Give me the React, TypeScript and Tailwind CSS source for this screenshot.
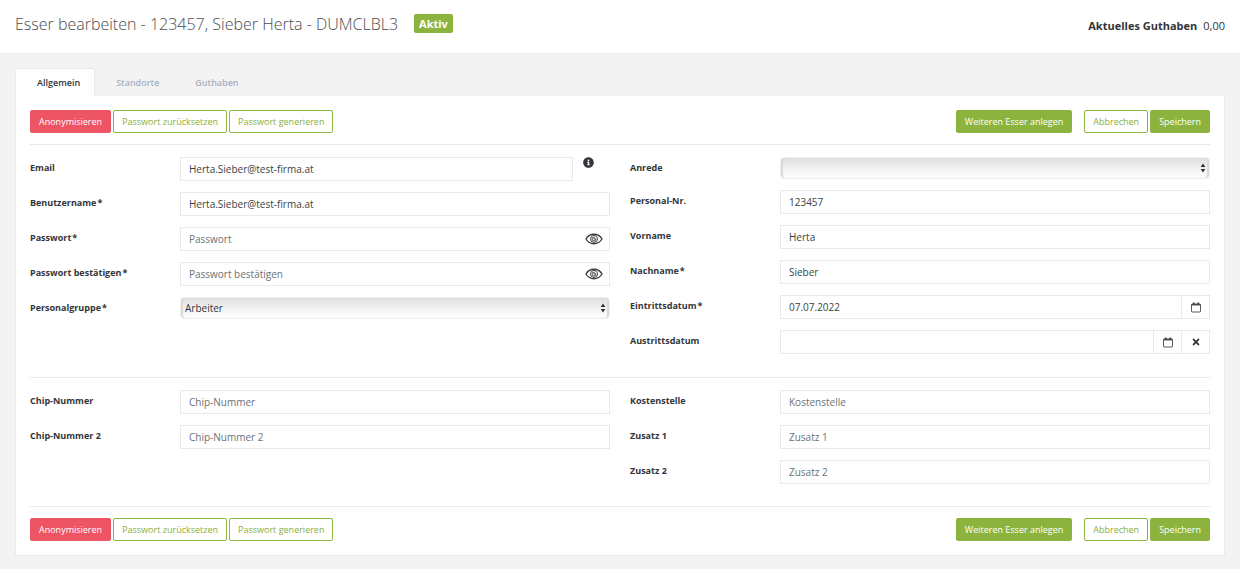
import { useState } from "react";
import type { InputHTMLAttributes, ReactNode } from "react";
import { FaInfoCircle, FaTimes } from "react-icons/fa";

const controlClass =
  "block h-6 w-full min-w-0 border border-[#e9e9e9] bg-white px-2 text-[10px] text-[#3c3f42] outline-none placeholder:text-[#6b7177] placeholder:opacity-100 focus:border-[#8db33f]";

type FieldProps = { id: string; label: string; required?: boolean };

function Row({ id, label, required, children }: FieldProps & { children: ReactNode }) {
  return (
    <div className="flex items-start">
      <label
        htmlFor={id}
        className="flex w-[150px] shrink-0 gap-px text-[9px] leading-[22px] font-bold text-[#33363a]"
      >
        {label}
        {required && <span>*</span>}
      </label>
      <div className="flex min-w-0 flex-1">{children}</div>
    </div>
  );
}

function TextRow({ id, label, required, ...rest }: FieldProps & InputHTMLAttributes<HTMLInputElement>) {
  return (
    <Row id={id} label={label} required={required}>
      <input id={id} className={controlClass} {...rest} />
    </Row>
  );
}

function EyeIcon() {
  return (
    <svg viewBox="0 0 18 12" className="h-3 w-[18px]" fill="none" stroke="#3c3f42">
      <path d="M1 6C3 2.6 5.8 1.3 9 1.3S15 2.6 17 6C15 9.4 12.200 10.700 9 10.700S3 9.400 1 6Z" strokeWidth="1.400" />
      <circle cx="9" cy="5.900" r="3.500" strokeWidth="1" />
      <path d="M9.200 4.100A1.900 1.900 0 1 0 10.900 5.800L9 6.100Z" strokeWidth="0.900" />
    </svg>
  );
}

function CalendarIcon() {
  return (
    <svg viewBox="0 0 10 11" className="h-[11px] w-[10px]" fill="none" stroke="#45484c">
      <rect x="0.500" y="2" width="9" height="8" rx="0.500" strokeWidth="0.900" />
      <path d="M0.500 2.700H9.500" strokeWidth="1.500" />
      <path d="M2.700 0.500V3M7.300 0.500V3" strokeWidth="1.700" />
    </svg>
  );
}

function PasswordRow({ id, label, placeholder }: { id: string; label: string; placeholder: string }) {
  const [shown, setShown] = useState(false);
  return (
    <Row id={id} label={label} required>
      <div className="flex h-6 w-full items-center border border-[#e9e9e9] bg-white pr-1.5">
        <input
          id={id}
          type={shown ? "text" : "password"}
          placeholder={placeholder}
          className="h-full min-w-0 flex-1 px-2 text-[10px] text-[#3c3f42] outline-none placeholder:text-[#6b7177] placeholder:opacity-100"
        />
        <button type="button" aria-label="Passwort anzeigen" onClick={() => setShown(!shown)}>
          <EyeIcon />
        </button>
      </div>
    </Row>
  );
}

function SelectRow({ id, label, required, options }: FieldProps & { options: string[] }) {
  return (
    <Row id={id} label={label} required={required}>
      <div className="relative w-full">
        <select
          id={id}
          className="block h-[22px] w-full appearance-none rounded-[4px] border border-[#efefef] bg-linear-to-b from-[#dedede] via-[#f1f1f1] to-white px-1 text-[10px] text-[#33363a] shadow-[inset_2px_0_1px_#dadada,inset_-2px_0_1px_#dadada] outline-none"
        >
          {options.map((option) => (
            <option key={option}>{option}</option>
          ))}
        </select>
        <svg
          viewBox="0 0 6 10"
          className="pointer-events-none absolute top-1.5 right-1 h-[10px] w-[6px]"
          fill="#2b2d30"
        >
          <path d="M3 0.500 5.300 4H0.700ZM3 9.500 5.300 6H0.700Z" />
        </svg>
      </div>
    </Row>
  );
}

function AddonButton({ label, children }: { label: string; children: ReactNode }) {
  return (
    <button
      type="button"
      aria-label={label}
      className="flex h-6 w-7 shrink-0 items-center justify-center border border-l-0 border-[#e9e9e9] bg-white text-[#33363a]"
    >
      {children}
    </button>
  );
}

const buttonBase = "h-[23px] rounded-[2px] border px-2 text-[9px] whitespace-nowrap";
const outlineButton = `${buttonBase} border-[#8fb63c] bg-white text-[#8aaf35]`;
const solidButton = `${buttonBase} border-[#8db33f] bg-[#8db33f] font-medium text-white`;
const dangerButton = `${buttonBase} border-[#ed5565] bg-[#ed5565] font-medium text-white`;

function ActionBar() {
  return (
    <div className="flex flex-wrap items-center justify-between gap-2">
      <div className="flex gap-0.5">
        <button type="button" className={dangerButton}>Anonymisieren</button>
        <button type="button" className={outlineButton}>Passwort zurücksetzen</button>
        <button type="button" className={outlineButton}>Passwort generieren</button>
      </div>
      <div className="flex gap-3">
        <button type="button" className={solidButton}>Weiteren Esser anlegen</button>
        <div className="flex gap-0.5">
          <button type="button" className={outlineButton}>Abbrechen</button>
          <button type="submit" className={solidButton}>Speichern</button>
        </div>
      </div>
    </div>
  );
}

const tabs = ["Allgemein", "Standorte", "Guthaben"];

export default function App() {
  const [active, setActive] = useState("Allgemein");
  return (
    <div className="min-h-screen bg-[#f3f3f3] pb-3.5 font-['Open_Sans',sans-serif] text-[#33363a]">
      <header className="flex h-[54px] items-center justify-between border-b border-[#ececec] bg-white px-[15px]">
        <div className="flex items-center gap-4 pb-1.5">
          <h1 className="text-base font-light text-[#4a4d50]">
            Esser bearbeiten - 123457, Sieber Herta - DUMCLBL3
          </h1>
          <span className="rounded-[2px] bg-[#8db33f] px-[5px] text-[11px] leading-[19px] font-bold text-white">
            Aktiv
          </span>
        </div>
        <p className="text-[11px]">
          <strong className="mr-1.5 font-bold">Aktuelles Guthaben</strong>0,00
        </p>
      </header>

      <main className="px-[15px] pt-3.5">
        <div role="tablist" className="flex">
          {tabs.map((tab) => (
            <button
              key={tab}
              type="button"
              role="tab"
              aria-selected={tab === active}
              onClick={() => setActive(tab)}
              className={
                tab === active
                  ? "h-7 rounded-t-[3px] border border-b-0 border-[#e9e9e9] bg-white pr-3.5 pl-[21px] text-[9px] font-semibold text-[#33363a]"
                  : "h-7 border border-b-0 border-transparent pr-3.5 pl-5 text-[9px] font-semibold text-[#a7b1c2]"
              }
            >
              {tab}
            </button>
          ))}
        </div>

        <form
          className="border border-t-0 border-[#e9ebeb] bg-white px-3.5 py-3.5"
          onSubmit={(event) => event.preventDefault()}
        >
          <ActionBar />

          <div className="mt-[11px] grid grid-cols-2 gap-x-5 border-t border-[#e7e7e7] pt-3 pb-[23px]">
            <div className="flex flex-col gap-[11px]">
              <Row id="email" label="Email">
                <input id="email" type="email" defaultValue="Herta.Sieber@test-firma.at" className={controlClass} />
                <FaInfoCircle className="mr-4 ml-2.5 h-[11px] w-[11px] shrink-0" />
              </Row>
              <TextRow id="user" label="Benutzername" required defaultValue="Herta.Sieber@test-firma.at" />
              <PasswordRow id="password" label="Passwort" placeholder="Passwort" />
              <PasswordRow id="confirm" label="Passwort bestätigen" placeholder="Passwort bestätigen" />
              <SelectRow id="group" label="Personalgruppe" required options={["Arbeiter", "Angestellte"]} />
            </div>
            <div className="flex flex-col gap-[11px]">
              <SelectRow id="salutation" label="Anrede" options={["", "Frau", "Herr"]} />
              <TextRow id="number" label="Personal-Nr." defaultValue="123457" />
              <TextRow id="first" label="Vorname" defaultValue="Herta" />
              <TextRow id="last" label="Nachname" required defaultValue="Sieber" />
              <Row id="entry" label="Eintrittsdatum" required>
                <input id="entry" defaultValue="07.07.2022" className={controlClass} />
                <AddonButton label="Kalender öffnen"><CalendarIcon /></AddonButton>
              </Row>
              <Row id="exit" label="Austrittsdatum">
                <input id="exit" className={controlClass} />
                <AddonButton label="Kalender öffnen"><CalendarIcon /></AddonButton>
                <AddonButton label="Datum löschen"><FaTimes className="h-[10px] w-[10px]" /></AddonButton>
              </Row>
            </div>
          </div>

          <div className="grid grid-cols-2 gap-x-5 border-y border-[#ececec] pt-3 pb-[22px]">
            <div className="flex flex-col gap-[11px]">
              <TextRow id="chip1" label="Chip-Nummer" placeholder="Chip-Nummer" />
              <TextRow id="chip2" label="Chip-Nummer 2" placeholder="Chip-Nummer 2" />
            </div>
            <div className="flex flex-col gap-[11px]">
              <TextRow id="cost" label="Kostenstelle" placeholder="Kostenstelle" />
              <TextRow id="extra1" label="Zusatz 1" placeholder="Zusatz 1" />
              <TextRow id="extra2" label="Zusatz 2" placeholder="Zusatz 2" />
            </div>
          </div>

          <div className="mt-[11px]">
            <ActionBar />
          </div>
        </form>
      </main>
    </div>
  );
}
